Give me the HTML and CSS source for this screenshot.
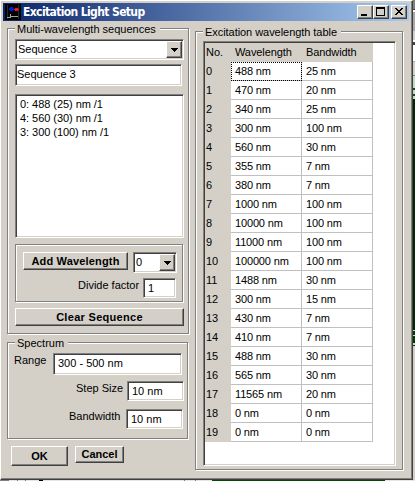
FILE: index.html
```html
<!DOCTYPE html>
<html lang="en">
<head>
<meta charset="utf-8">
<title>Excitation Light Setup</title>
<link rel="stylesheet" href="styles.css">
</head>
<body>
<div class="desktop">
<main class="window">
  <header class="titlebar">
    <svg class="app-icon" width="16" height="16" viewBox="0 0 16 16" shape-rendering="crispEdges">
      <rect width="16" height="16" fill="#000"/>
      <path d="M2.5 1v14M13.5 1v14" stroke="#173030"/>
      <path d="M4 4h1v-1h3v1h1v2h-1v1h-3v-1h-1z" fill="#0018e8"/>
      <path d="M9 5h1v-1h3v1h1v1h-1v1h-3v-1h-1z" fill="#f01818"/>
      <path d="M2 13.5h3M6 12.5h7M5.5 10v4" stroke="#a0a0a0" fill="none"/>
    </svg>
    <h1>Excitation Light Setup</h1>
    <div class="controls">
      <button class="ctl"><svg width="12" height="10" viewBox="0 0 12 10"><path d="M2 7h6v2h-6z"/></svg></button>
      <button class="ctl"><svg width="12" height="10" viewBox="0 0 12 10"><path fill-rule="evenodd" d="M1 0h9v9H1zM2 2v6h7V2z"/></svg></button>
      <button class="ctl close"><svg width="12" height="10" viewBox="0 0 12 10"><path d="M2 1h2v1h1v1h2v-1h1v-1h2v1h-1v1h-1v1h-1v1h1v1h1v1h1v1h-2v-1h-1v-1h-2v1h-1v1h-2v-1h1v-1h1v-1h1v-1h-1v-1h-1v-1h-1z"/></svg></button>
    </div>
  </header>
  <div class="content">
    <div class="left">
      <section class="group sequences">
        <h2 class="legend">Multi-wavelength sequences</h2>
        <div class="field combo seq-combo"><span>Sequence 3</span><i class="drop"><svg width="7" height="4" viewBox="0 0 7 4"><path d="M0 0h7v1h-1v1h-1v1h-1v1h-1v-1h-1v-1h-1v-1h-1z"/></svg></i></div>
        <div class="field seq-name">Sequence 3</div>
        <ul class="field list"><li>0: 488 (25) nm /1</li><li>4: 560 (30) nm /1</li><li>3: 300 (100) nm /1</li></ul>
        <div class="etched panel">
          <div class="add-row">
            <button class="btn add">Add Wavelength</button>
            <div class="field combo num-combo"><span>0</span><i class="drop"><svg width="7" height="4" viewBox="0 0 7 4"><path d="M0 0h7v1h-1v1h-1v1h-1v1h-1v-1h-1v-1h-1v-1h-1z"/></svg></i></div>
          </div>
          <div class="divide-row"><label>Divide factor</label><div class="field divide">1</div></div>
        </div>
        <button class="btn clear">Clear Sequence</button>
      </section>
      <section class="group spectrum">
        <h2 class="legend">Spectrum</h2>
        <div class="row range-row"><label>Range</label><div class="field range">300 - 500 nm</div></div>
        <div class="row step-row"><label>Step Size</label><div class="field short">10 nm</div></div>
        <div class="row band-row"><label>Bandwidth</label><div class="field short">10 nm</div></div>
      </section>
      <div class="actions"><button class="btn ok">OK</button><button class="btn cancel">Cancel</button></div>
    </div>
    <section class="group excitation">
      <h2 class="legend">Excitation wavelength table</h2>
      <div class="field grid-box">
        <table>
          <thead><tr><th>No.</th><th>Wavelength</th><th>Bandwidth</th></tr></thead>
          <tbody>
            <tr><th>0</th><td class="focus">488 nm</td><td>25 nm</td></tr>
            <tr><th>1</th><td>470 nm</td><td>20 nm</td></tr>
            <tr><th>2</th><td>340 nm</td><td>25 nm</td></tr>
            <tr><th>3</th><td>300 nm</td><td>100 nm</td></tr>
            <tr><th>4</th><td>560 nm</td><td>30 nm</td></tr>
            <tr><th>5</th><td>355 nm</td><td>7 nm</td></tr>
            <tr><th>6</th><td>380 nm</td><td>7 nm</td></tr>
            <tr><th>7</th><td>1000 nm</td><td>100 nm</td></tr>
            <tr><th>8</th><td>10000 nm</td><td>100 nm</td></tr>
            <tr><th>9</th><td>11000 nm</td><td>100 nm</td></tr>
            <tr><th>10</th><td>100000 nm</td><td>100 nm</td></tr>
            <tr><th>11</th><td>1488 nm</td><td>30 nm</td></tr>
            <tr><th>12</th><td>300 nm</td><td>15 nm</td></tr>
            <tr><th>13</th><td>430 nm</td><td>7 nm</td></tr>
            <tr><th>14</th><td>410 nm</td><td>7 nm</td></tr>
            <tr><th>15</th><td>488 nm</td><td>30 nm</td></tr>
            <tr><th>16</th><td>565 nm</td><td>30 nm</td></tr>
            <tr><th>17</th><td>11565 nm</td><td>20 nm</td></tr>
            <tr><th>18</th><td>0 nm</td><td>0 nm</td></tr>
            <tr><th>19</th><td>0 nm</td><td>0 nm</td></tr>
          </tbody>
        </table>
      </div>
    </section>
  </div>
</main>
<div class="edge-right"></div>
<div class="edge-bottom"></div>
</div>
</body>
</html>
```
FILE: styles.css
```css
* { box-sizing: border-box; }
body {
  margin: 0;
  overflow: hidden;
  font: 11px/13px "Liberation Sans", Arial, sans-serif;
  color: #000;
  background: #d4d0c8;
}
h1, h2, ul { margin: 0; padding: 0; font: inherit; list-style: none; }
button { font: inherit; color: inherit; margin: 0; padding: 0; }
label, .field, li, td, th, .legend { white-space: nowrap; }

.desktop { display: grid; grid-template: 480px 1px / 413px 2px; }
.edge-right {
  background: linear-gradient(#808080 0 9px, #404040 9px 10px, #fff 10px 12px, #a8a8a8 12px 31px, #d4d0c8 31px 40px, #fff 40px 42px, #404040 42px 45px, #fff 45px 61px, #a8a8a8 61px 62px, #d4d0c8 62px 75px, #808080 75px 76px, #c0dcc0 76px 88px, #204020 88px 90px, #c0dcc0 90px 94px, #204020 94px 96px, #c0dcc0 96px 99px, #002800 99px 330px, #c0dcc0 330px 331px, #003c00 331px 335px, #c0dcc0 335px 336px, #003c00 336px 343px, #c0dcc0 343px 345px, #003c00 345px 346px, #d4d0c8 346px);
}
.edge-bottom {
  grid-column: 1 / 3;
  background: linear-gradient(90deg, #808080 0 9px, #e8e4e0 9px 17px, #808080 17px 18px, #e8e4e0 18px 25px, #808080 25px 26px, #e8e4e0 26px 39px, #000 39px 43px, #e8e4e0 43px 184px, #808080 184px 185px, #e8e4e0 185px 195px, #808080 195px 196px, #e8e4e0 196px 212px, #004c00 212px 385px, #e8e4e0 385px);
}
.window {
  height: 480px;
  padding: 2px 3px 0 2px;
  background: #d4d0c8;
  border: 1px solid;
  border-color: #fff #404040 #404040 #fff;
  box-shadow: inset -1px -1px 0 #808080;
}
.titlebar {
  display: flex;
  align-items: center;
  height: 18px;
  padding: 0 2px;
  color: #fff;
  background: linear-gradient(90deg, #0a246a, #a6caf0);
}
.app-icon { flex: none; }
.titlebar h1 {
  flex: 1;
  margin-left: 2px;
  font: bold 12px/16px "DejaVu Sans Condensed", "DejaVu Sans", sans-serif;
  letter-spacing: -0.62px;
  white-space: nowrap;
}
.controls { display: flex; }
.ctl {
  display: flex;
  width: 16px;
  height: 14px;
  padding: 1px;
  background: #d4d0c8;
  border: 1px solid;
  border-color: #fff #404040 #404040 #fff;
  box-shadow: inset -1px -1px 0 #808080;
}
.ctl.close { margin-left: 2px; }

.content { display: flex; }
.left { width: 182px; margin-left: 4px; }
.group, .etched {
  border: 1px solid #808080;
  box-shadow: 1px 1px 0 #fff, inset 1px 1px 0 #fff;
}
.group { padding-left: 7px; }
.legend {
  width: max-content;
  margin-top: -6px;
  padding: 0 2px;
  background: #d4d0c8;
}
.sequences { height: 306px; margin-top: 7px; }
.sequences .legend, .spectrum .legend { padding-right: 4px; }
.field {
  background: #fff;
  border: 1px solid;
  border-color: #808080 #fff #fff #808080;
  box-shadow: inset 1px 1px 0 #404040, inset -1px -1px 0 #d4d0c8;
}
.combo { display: flex; justify-content: space-between; padding: 1px; }
.drop {
  display: flex;
  align-items: center;
  justify-content: center;
  width: 16px;
  background: #d4d0c8;
  border: 1px solid;
  border-color: #fff #404040 #404040 #fff;
  box-shadow: inset -1px -1px 0 #808080;
}
.seq-combo { width: 169px; height: 21px; margin-top: 3px; }
.seq-combo span { padding: 2px 0 0 1px; }
.seq-name { width: 167px; height: 22px; margin-top: 4px; padding: 3px 0 0 1px; }
.list { width: 169px; height: 144px; margin-top: 8px; padding: 2px 0 0 4px; line-height: 14px; }
.list li { letter-spacing: -0.05px; }
.panel { width: 168px; height: 58px; margin-top: 6px; padding: 7px 0 0 7px; }
.add-row { display: flex; gap: 5px; }
.btn {
  display: block;
  font-weight: bold;
  text-align: center;
  background: #d4d0c8;
  border: 1px solid;
  border-color: #fff #404040 #404040 #fff;
  box-shadow: inset -1px -1px 0 #808080;
}
.add { width: 105px; height: 18px; letter-spacing: 0.17px; }
.num-combo { width: 44px; height: 21px; }
.num-combo span { padding: 2px 0 0 1px; }
.divide-row { display: flex; margin: 5px 0 0 55px; }
.divide-row label { width: 65px; padding-top: 1px; }
.divide { width: 33px; height: 20px; padding: 3px 0 0 4px; }
.clear { width: 169px; height: 18px; margin-top: 6px; letter-spacing: 0.3px; }

.spectrum { width: 181px; height: 97px; margin-top: 8px; }
.row { display: flex; }
.range-row { margin: 3px 0 0 -1px; }
.range-row label { width: 39px; padding-top: 1px; }
.range { width: 129px; height: 22px; padding: 3px 0 0 4px; }
.step-row { margin: 6px 0 0 61px; }
.step-row label { width: 51px; padding-top: 1px; }
.short { width: 57px; height: 20px; padding: 3px 0 0 4px; }
.band-row { margin: 8px 0 0 54px; }
.band-row label { width: 57px; padding-top: 1px; }

.actions { display: flex; gap: 7px; margin: 7px 0 0 4px; }
.ok { width: 57px; height: 20px; }
.cancel { width: 49px; height: 17px; }

.excitation { width: 208px; height: 439px; margin: 10px 0 0 6px; }
.excitation .legend { padding: 0 4px 0 2px; letter-spacing: -0.05px; }
.grid-box { width: 193px; height: 425px; margin-top: 2px; padding: 1px; }
table { border-collapse: separate; border-spacing: 0; table-layout: fixed; width: 168px; }
tr { height: 19px; }
th { width: 26px; padding: 0 0 0 1px; font-weight: normal; text-align: left; background: #d4d0c8; }
thead th + th { width: 71px; padding-left: 4px; letter-spacing: -0.1px; }
td { padding: 0 0 0 4px; border-right: 1px solid #c0c0c0; border-bottom: 1px solid #c0c0c0; letter-spacing: -0.15px; }
td.focus { outline: 1px dotted #000; outline-offset: -1px; }
```
